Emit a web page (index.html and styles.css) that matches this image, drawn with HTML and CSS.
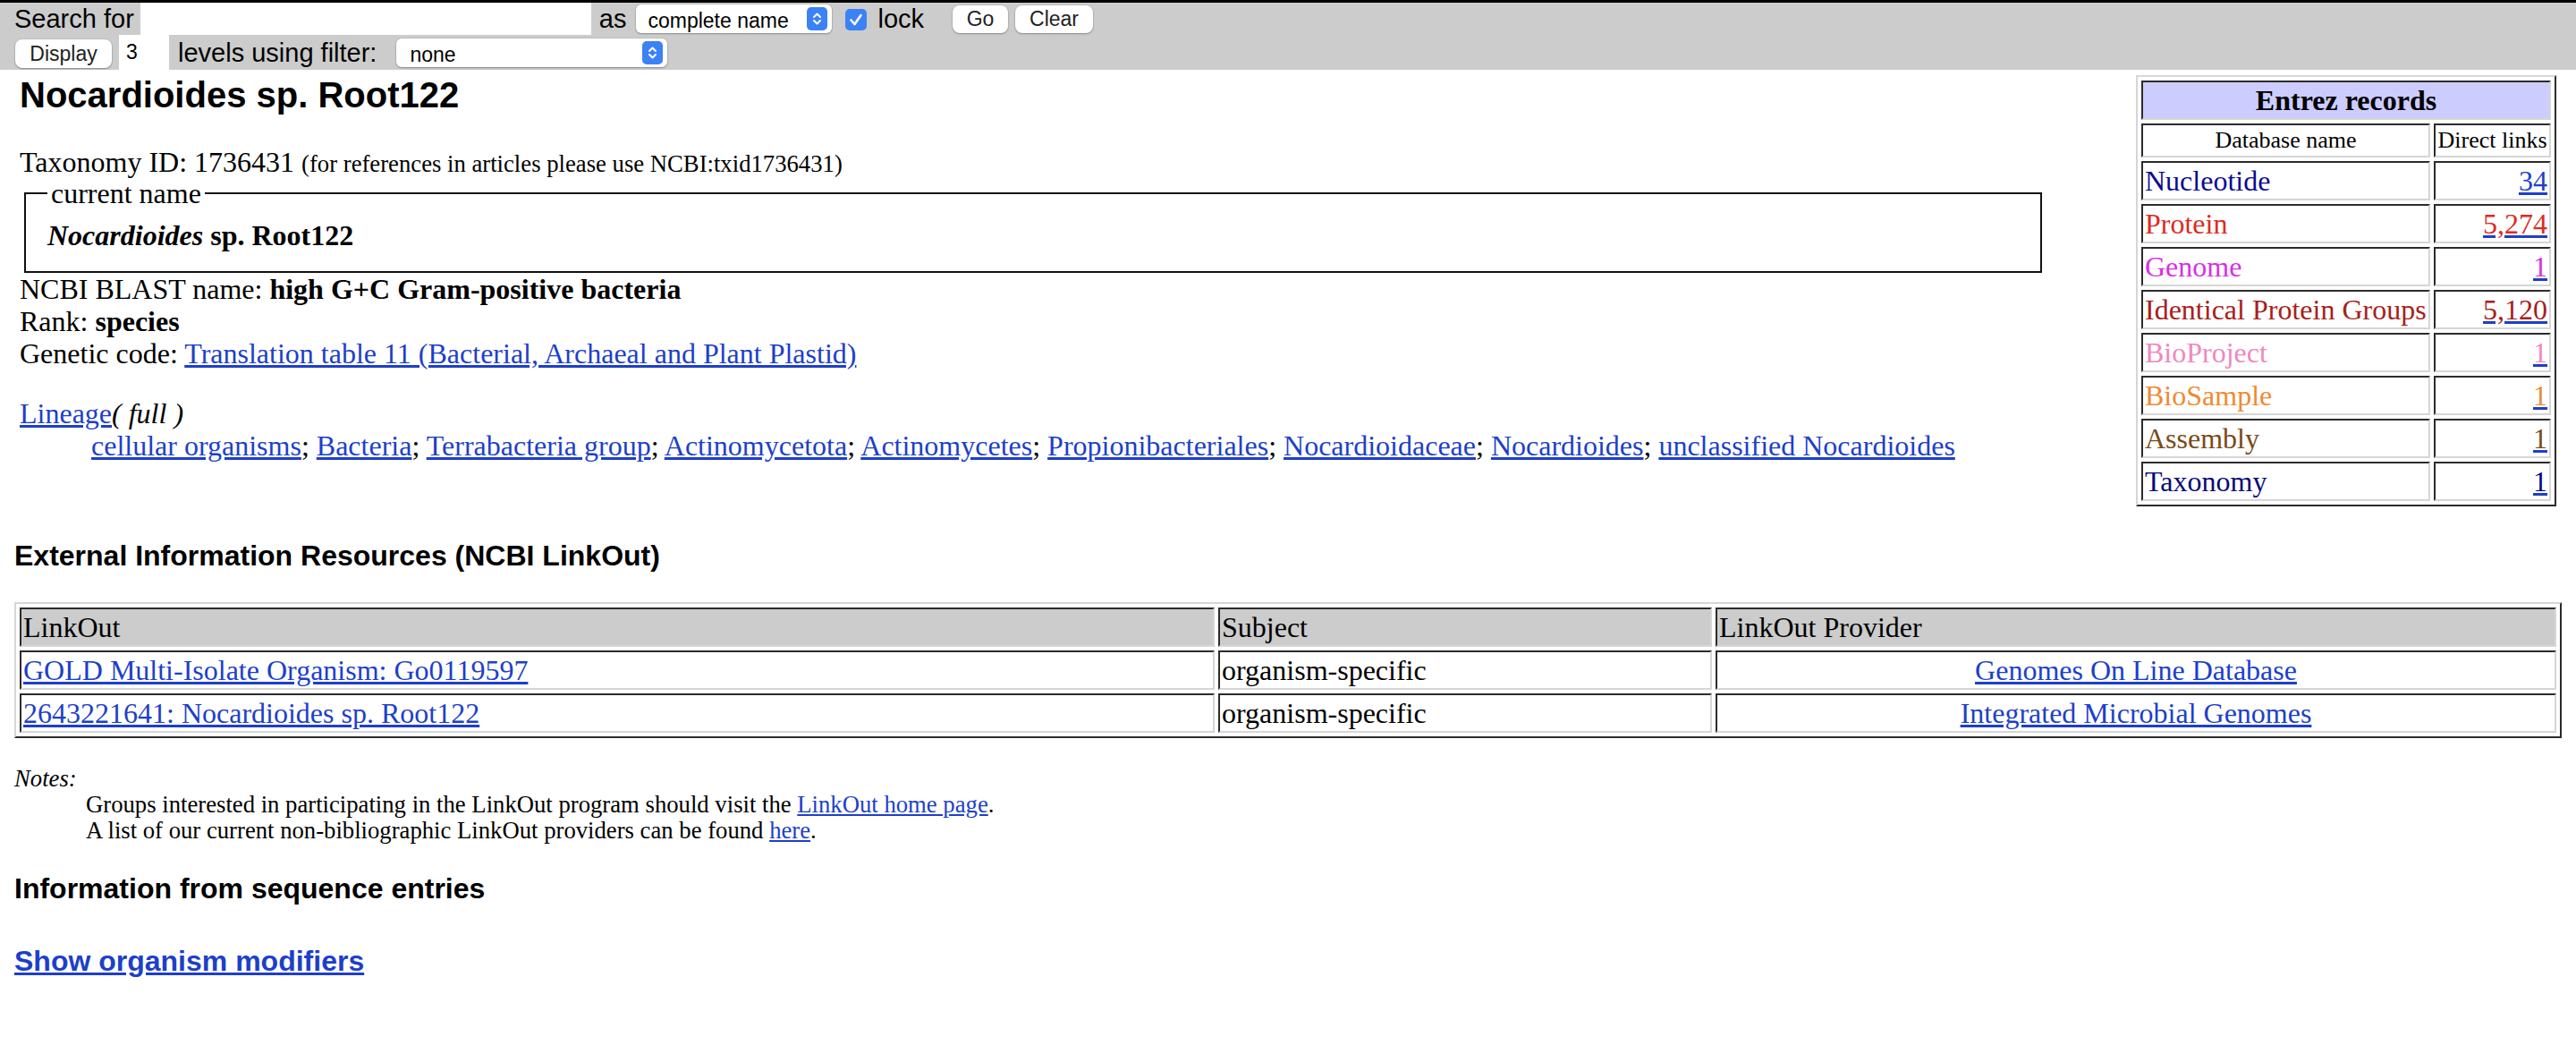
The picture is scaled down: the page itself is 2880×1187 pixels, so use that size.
FILE: index.html
```html
<!DOCTYPE html>
<html>
<head>
<meta charset="utf-8">
<title>Taxonomy browser (Nocardioides sp. Root122)</title>
<link rel="stylesheet" href="styles.css">
</head>
<body>
<form class="topbar">
  <div class="bar-row row1">
    <span class="lbl">Search for</span>
    <input class="search" type="text">
    <span class="lbl as">as</span>
    <span class="sel sel-name">
      <select><option>complete name</option></select>
      <svg class="sel-arrow" width="23" height="26" viewBox="0 0 23 26"><rect width="23" height="26" rx="5" fill="#3b82f6"/><path d="M8 11 L11.5 7.5 L15 11 M8 15 L11.5 18.5 L15 15" stroke="#fff" stroke-width="2" fill="none" stroke-linecap="round" stroke-linejoin="round"/></svg>
    </span>
    <span class="chk"><svg width="24" height="24" viewBox="0 0 24 24"><rect width="24" height="24" rx="5" fill="#3b82f6"/><path d="M6.5 12.5 L10.5 17 L17.5 7" stroke="#fff" stroke-width="2.6" fill="none" stroke-linecap="round" stroke-linejoin="round"/></svg></span>
    <span class="lbl lock">lock</span>
    <button type="button" class="btn btn-go">Go</button>
    <button type="button" class="btn btn-clear">Clear</button>
  </div>
  <div class="bar-row row2">
    <button type="button" class="btn btn-display">Display</button>
    <input class="levels" type="text" value="3">
    <span class="lbl filter">levels using filter:</span>
    <span class="sel sel-filter">
      <select><option>none</option></select>
      <svg class="sel-arrow" width="23" height="26" viewBox="0 0 23 26"><rect width="23" height="26" rx="5" fill="#3b82f6"/><path d="M8 11 L11.5 7.5 L15 11 M8 15 L11.5 18.5 L15 15" stroke="#fff" stroke-width="2" fill="none" stroke-linecap="round" stroke-linejoin="round"/></svg>
    </span>
  </div>
</form>

<div class="main">
  <div class="info">
    <h1 class="title">Nocardioides sp. Root122</h1>
    <div class="line taxid">Taxonomy ID: 1736431 <small>(for references in articles please use NCBI:txid1736431)</small></div>
    <fieldset class="curname">
      <legend>current name</legend>
      <div class="line"><strong><em>Nocardioides</em> sp. Root122</strong></div>
    </fieldset>
    <div class="line">NCBI BLAST name: <strong>high G+C Gram-positive bacteria</strong></div>
    <div class="line">Rank: <strong>species</strong></div>
    <div class="line">Genetic code: <a href="#">Translation table 11 (Bacterial, Archaeal and Plant Plastid)</a></div>
    <div class="line lineage-head"><a href="#">Lineage</a><em>( full )</em></div>
    <div class="line lineage"><a href="#">cellular organisms</a>; <a href="#">Bacteria</a>; <a href="#">Terrabacteria group</a>; <a href="#">Actinomycetota</a>; <a href="#">Actinomycetes</a>; <a href="#">Propionibacteriales</a>; <a href="#">Nocardioidaceae</a>; <a href="#">Nocardioides</a>; <a href="#">unclassified Nocardioides</a></div>
  </div>

  <table class="entrez">
    <tr><th colspan="2" class="ent-head">Entrez records</th></tr>
    <tr><td class="ent-sub dbname">Database name</td><td class="ent-sub">Direct links</td></tr>
    <tr><td class="dbname c-nuc">Nucleotide</td><td class="num"><a href="#">34</a></td></tr>
    <tr><td class="dbname c-prot">Protein</td><td class="num"><a href="#" class="c-prot">5,274</a></td></tr>
    <tr><td class="dbname c-gen">Genome</td><td class="num"><a href="#" class="c-gen">1</a></td></tr>
    <tr><td class="dbname c-ipg">Identical Protein Groups</td><td class="num"><a href="#" class="c-ipg">5,120</a></td></tr>
    <tr><td class="dbname c-bproj">BioProject</td><td class="num"><a href="#" class="c-bproj">1</a></td></tr>
    <tr><td class="dbname c-bsamp">BioSample</td><td class="num"><a href="#" class="c-bsamp">1</a></td></tr>
    <tr><td class="dbname c-asm">Assembly</td><td class="num"><a href="#" class="c-asm">1</a></td></tr>
    <tr><td class="dbname c-tax">Taxonomy</td><td class="num"><a href="#" class="c-tax">1</a></td></tr>
  </table>
</div>

<h3 class="sect ext">External Information Resources (NCBI LinkOut)</h3>

<table class="linkout">
  <colgroup><col class="lc1"><col class="lc2"><col class="lc3"></colgroup>
  <tr><th>LinkOut</th><th>Subject</th><th>LinkOut Provider</th></tr>
  <tr><td><a href="#">GOLD Multi-Isolate Organism: Go0119597</a></td><td>organism-specific</td><td class="prov"><a href="#">Genomes On Line Database</a></td></tr>
  <tr><td><a href="#">2643221641: Nocardioides sp. Root122</a></td><td>organism-specific</td><td class="prov"><a href="#">Integrated Microbial Genomes</a></td></tr>
</table>

<div class="notes">
  <div class="notes-title"><em>Notes:</em></div>
  <div class="notes-body">
    <div>Groups interested in participating in the LinkOut program should visit the <a href="#">LinkOut home page</a>.</div>
    <div>A list of our current non-bibliographic LinkOut providers can be found <a href="#">here</a>.</div>
  </div>
</div>

<h3 class="sect seq">Information from sequence entries</h3>

<a href="#" class="showmod">Show organism modifiers</a>
</body>
</html>
```

FILE: styles.css
```css
html, body {
  margin: 0;
  padding: 0;
  background: #fff;
}
body {
  font-family: "Liberation Serif", "Times New Roman", serif;
  font-size: 32px;
  color: #000;
}
a {
  color: #1d3fca;
  text-decoration: underline;
}

/* ---------- top search bar ---------- */
.topbar {
  margin: 0;
  background: #cccccc;
  border-top: 3px solid #000;
  font-family: "Liberation Sans", Arial, sans-serif;
  font-size: 29px;
}
.bar-row {
  display: flex;
  align-items: center;
}
.row1 {
  height: 36px;
  padding-left: 16px;
}
.row2 {
  height: 39px;
  padding-left: 17px;
}
.lbl {
  white-space: nowrap;
  line-height: 36px;
}
.search {
  align-self: stretch;
  width: 504px;
  margin: 0 0 0 7px;
  padding: 0 6px;
  border: none;
  background: #fff;
  box-sizing: border-box;
  font: 23px "Liberation Sans", Arial, sans-serif;
  outline: none;
}
.as { margin-left: 9px; }
.sel {
  position: relative;
  display: inline-block;
  height: 32px;
  background: #fff;
  border-radius: 6px;
  box-shadow: 0 0 0 1px rgba(0,0,0,0.06), 0 1px 2px rgba(0,0,0,0.28);
  box-sizing: border-box;
}
.sel select {
  appearance: none;
  -webkit-appearance: none;
  border: none;
  background: transparent;
  width: 100%;
  height: 32px;
  margin: 0;
  font: 23px "Liberation Sans", Arial, sans-serif;
  color: #000;
  outline: none;
}
.sel-arrow {
  position: absolute;
  right: 5px;
  top: 3px;
}
.sel-name {
  width: 219px;
  margin-left: 11px;
}
.sel-name select { padding: 0 0 0 13px; }
.sel-filter {
  width: 303px;
  margin-left: 22px;
}
.sel-filter select { padding: 0 0 0 15px; }
.chk {
  display: inline-block;
  width: 24px;
  height: 24px;
  margin-left: 15px;
  margin-top: 2px;
}
.chk svg { display: block; }
.lock { margin-left: 12px; }
.btn {
  height: 31px;
  padding: 0;
  border: none;
  border-radius: 8px;
  background: #fff;
  box-shadow: 0 0 0 1px rgba(0,0,0,0.05), 0 1px 2px rgba(0,0,0,0.3);
  font: 23px "Liberation Sans", Arial, sans-serif;
  color: #222;
  text-align: center;
}
.btn-go { width: 62px; margin-left: 32px; }
.btn-clear { width: 87px; margin-left: 8px; }
.btn-display { width: 108px; height: 32px; margin-top: 3px; }
.levels {
  align-self: stretch;
  width: 56px;
  margin-left: 8px;
  padding: 0 0 0 8px;
  border: none;
  background: #fff;
  box-sizing: border-box;
  font: 23px "Liberation Sans", Arial, sans-serif;
  outline: none;
}
.filter { margin-left: 10px; }

/* ---------- main info block ---------- */
.main {
  display: flex;
  align-items: flex-start;
  padding: 6px 22px 0 22px;
}
.info {
  flex: 1;
  min-width: 0;
}
.title {
  margin: 0;
  font: bold 40px/45px "Liberation Sans", Arial, sans-serif;
}
.line {
  line-height: 36px;
  white-space: nowrap;
}
.taxid { margin-top: 34px; }
.taxid small { font-size: 26.7px; }
.curname {
  box-sizing: border-box;
  width: 2256px;
  margin: -3px 0 0 5px;
  padding: 11px 24px 22px 24px;
  border: 2px solid #111;
}
.curname legend {
  padding: 0 4px;
  line-height: 36px;
}
.lineage-head { margin-top: 31px; }
.lineage { padding-left: 80px; }

/* ---------- Entrez records ---------- */
.entrez {
  flex: none;
  width: 470px;
  border-collapse: separate;
  border-spacing: 4px;
  border: 2px solid;
  border-color: #d6d6d6 #2b2b2b #2b2b2b #d6d6d6;
}
.entrez th, .entrez td {
  border: 2px solid;
  border-color: #2b2b2b #d6d6d6 #d6d6d6 #2b2b2b;
  padding: 2px;
  line-height: 36px;
  white-space: nowrap;
}
.ent-head {
  background: #ccccff;
  font-weight: bold;
  text-align: center;
}
.ent-sub {
  font-size: 26px;
  line-height: 30px !important;
  text-align: center;
}
.dbname { width: 315px; text-align: left; }
.ent-sub.dbname { text-align: center; }
.num { text-align: right; }
.num a { text-decoration-color: #1d3fca; }
.c-nuc { color: #0a0a96; }
.c-prot { color: #dc2b20; }
.c-gen { color: #d92ee8; }
.c-ipg { color: #a8201a; }
.c-bproj { color: #ef88bf; }
.c-bsamp { color: #ee8a33; }
.c-asm { color: #7a4a16; }
.c-tax { color: #0a0a78; }

/* ---------- sections ---------- */
.sect {
  margin: 0 16px;
  font: bold 32px/37px "Liberation Sans", Arial, sans-serif;
}
.ext { margin-top: 37px; }
.seq { margin-top: 32px; }

.linkout {
  width: 2848px;
  margin: 33px 16px 0 16px;
  table-layout: fixed;
  border-collapse: separate;
  border-spacing: 4px;
  border: 2px solid;
  border-color: #d6d6d6 #2b2b2b #2b2b2b #d6d6d6;
}
.lc1 { width: 1336px; }
.lc2 { width: 552px; }
.lc3 { width: 940px; }
.linkout th, .linkout td {
  border: 2px solid;
  border-color: #2b2b2b #d6d6d6 #d6d6d6 #2b2b2b;
  padding: 2px;
  line-height: 36px;
  text-align: left;
  font-weight: normal;
  white-space: nowrap;
  overflow: hidden;
}
.linkout th { background: #cccccc; }
.linkout td.prov { text-align: center; }

.notes {
  margin: 31px 16px 0 16px;
  font-size: 26.7px;
  line-height: 29px;
}
.notes-body { padding-left: 80px; }

.showmod {
  display: inline-block;
  margin: 44px 0 0 16px;
  font: bold 32px/37px "Liberation Sans", Arial, sans-serif;
}
```
